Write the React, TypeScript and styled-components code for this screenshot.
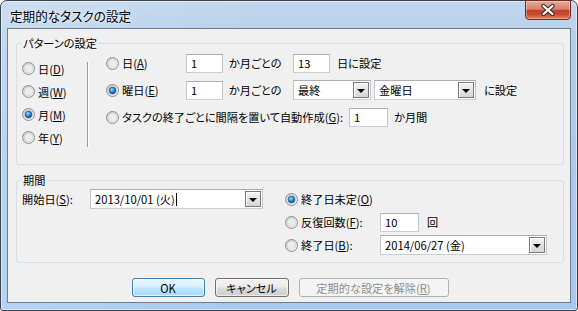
import React from 'react';
import styled, { createGlobalStyle } from 'styled-components';

const GlobalStyle = createGlobalStyle`
  html, body {
    margin: 0;
    padding: 0;
    background: #ffffff;
  }
  body {
    font-family: 'Noto Sans CJK JP', 'Noto Sans', sans-serif;
    font-size: 11.2px;
    line-height: 14px;
    color: #000;
    font-feature-settings: 'palt';
  }
`;

const Window = styled.div`
  box-sizing: border-box;
  width: 578px;
  height: 311px;
  display: flex;
  flex-direction: column;
  padding: 0 6px 7px 6px;
  border: 1px solid #39434e;
  border-radius: 7px 7px 3px 3px;
  background:
    linear-gradient(90deg, rgba(255, 255, 255, 0.18), rgba(255, 255, 255, 0) 45%),
    linear-gradient(180deg, #c2d7ee 0%, #b6cfea 12%, #a9c9ec 55%, #a6c9ef 100%);
  box-shadow: inset 0 0 0 1px rgba(255, 255, 255, 0.5);
`;

const TitleBar = styled.div`
  height: 27px;
  display: flex;
  justify-content: space-between;
  align-items: flex-start;
`;

const Title = styled.div`
  padding: 7px 0 0 3px;
  font-size: 12.6px;
  line-height: 16px;
  text-shadow: 0 0 6px rgba(255, 255, 255, 0.9), 0 0 2px rgba(255, 255, 255, 0.8);
`;

const CloseButton = styled.div`
  box-sizing: border-box;
  width: 46px;
  height: 20px;
  margin-top: -1px;
  display: flex;
  align-items: center;
  justify-content: center;
  border: 1px solid #6b2a22;
  border-radius: 0 0 4px 4px;
  background: linear-gradient(180deg, #e8a898 0%, #d9826d 45%, #c4412a 52%, #cc4a2f 75%, #e4805e 100%);
  box-shadow: inset 0 0 0 1px rgba(255, 255, 255, 0.35);
`;

const Client = styled.div`
  flex: 1;
  display: flex;
  flex-direction: column;
  padding: 7px 6px 0 8px;
  background: #f0f0f0;
  border: 1px solid #6f7d8e;
`;

const Group = styled.fieldset<{ $h: number; $top?: number }>`
  box-sizing: border-box;
  height: ${p => p.$h}px;
  margin: ${p => p.$top ?? 0}px 0 0 0;
  padding: 0 6px 0 5px;
  min-width: 0;
  border: 1px solid #d5dfe5;
  border-radius: 3px;
`;

const Legend = styled.legend`
  padding: 0 1px;
  line-height: 14px;
`;

const PatternBody = styled.div`
  display: flex;
  align-items: flex-start;
  padding-top: 7px;
`;

const ModeCol = styled.div`
  width: 65px;
  display: flex;
  flex-direction: column;
`;

const ModeRow = styled.div`
  height: 23px;
  display: flex;
  align-items: center;
`;

const Separator = styled.div`
  width: 1px;
  height: 85px;
  margin: 5px 18px 0 0;
  background: #a0a0a0;
  box-shadow: 1px 0 0 #ffffff;
`;

const RuleGrid = styled.div`
  margin-top: -4px;
  display: grid;
  grid-template-columns: 80px 37px 70px max-content;
  grid-auto-rows: 20px;
  row-gap: 7px;
  align-items: center;
`;

const RadioLabel = styled.label`
  display: flex;
  align-items: center;
  gap: 3px;
  white-space: nowrap;
`;

const Text = styled.span<{ $pad?: number }>`
  padding-left: ${p => p.$pad ?? 0}px;
  white-space: nowrap;
`;

const Key = styled.span`
  text-decoration: underline;
  text-underline-offset: 1px;
`;

const TextBox = styled.div<{ $w: number }>`
  box-sizing: border-box;
  width: ${p => p.$w}px;
  height: 19px;
  padding-left: 4px;
  line-height: 17px;
  background: #ffffff;
  border: 1px solid #abadb3;
  border-color: #abadb3 #c2c5cc #c9ced6 #c2c5cc;
  white-space: nowrap;
`;

const Combo = styled.div<{ $w: number }>`
  box-sizing: border-box;
  width: ${p => p.$w}px;
  height: 20px;
  display: flex;
  align-items: center;
  justify-content: space-between;
  padding: 0 1px 0 4px;
  background: #ffffff;
  border: 1px solid #abadb3;
  border-color: #abadb3 #c2c5cc #c9ced6 #c2c5cc;
  white-space: nowrap;
`;

const DropButton = styled.div`
  box-sizing: border-box;
  width: 16px;
  height: 16px;
  display: flex;
  align-items: center;
  justify-content: center;
  border: 1px solid #7a7a7a;
  background: linear-gradient(180deg, #f4f4f4 0%, #e4e4e4 50%, #d6d6d6 100%);
  box-shadow: inset 1px 1px 0 #ffffff;
`;

const Arrow = styled.span`
  width: 0;
  height: 0;
  margin-top: 2px;
  border-left: 4px solid transparent;
  border-right: 4px solid transparent;
  border-top: 4px solid #000;
`;

const Caret = styled.span`
  display: inline-block;
  width: 1px;
  height: 13px;
  margin-left: 1px;
  vertical-align: -2px;
  background: #000;
`;

const Inline = styled.div<{ $gap: number }>`
  display: flex;
  align-items: center;
  gap: ${p => p.$gap}px;
`;

const WideRow = styled.div`
  grid-column: 1 / -1;
  display: flex;
  align-items: center;
  gap: 6px;
`;

const PeriodBody = styled.div`
  display: flex;
  align-items: flex-start;
  padding-top: 2px;
`;

const StartRow = styled.div`
  height: 20px;
  display: flex;
  align-items: center;
`;

const StartLabel = styled.span`
  width: 68px;
  white-space: nowrap;
`;

const EndGrid = styled.div`
  margin-left: 22px;
  display: grid;
  grid-template-columns: 95px max-content;
  grid-auto-rows: 20px;
  row-gap: 3px;
  align-items: center;
`;

const Buttons = styled.div`
  margin-top: 15px;
  display: flex;
  justify-content: center;
  gap: 10px;
`;

const Button = styled.div<{ $w: number; $kind?: 'default' | 'normal' | 'disabled' }>`
  box-sizing: border-box;
  width: ${p => p.$w}px;
  height: 19px;
  display: flex;
  align-items: center;
  justify-content: center;
  border-radius: 3px;
  border: 1px solid
    ${p => (p.$kind === 'default' ? '#3c7fb1' : p.$kind === 'disabled' ? '#adb2b5' : '#707070')};
  color: ${p => (p.$kind === 'disabled' ? '#8d8d8d' : '#000')};
  background: ${p =>
    p.$kind === 'default'
      ? 'linear-gradient(180deg, #eaf6fd 0%, #d9f0fc 48%, #bee6fd 52%, #a9daf6 100%)'
      : p.$kind === 'disabled'
      ? '#f4f4f4'
      : 'linear-gradient(180deg, #f2f2f2 0%, #ebebeb 48%, #dddddd 52%, #cfcfcf 100%)'};
  box-shadow: inset 0 0 0 1px rgba(255, 255, 255, ${p => (p.$kind === 'disabled' ? 0 : 0.6)});
  white-space: nowrap;
`;

const RadioMark = styled.svg`
  flex-shrink: 0;
  display: block;
`;

function Radio({ checked }: { checked?: boolean }) {
  const id = checked ? 'rdOn' : 'rdOff';
  return (
    <RadioMark width="13" height="13" viewBox="0 0 13 13">
      <defs>
        <linearGradient id={`${id}Ring`} x1="0" y1="0" x2="1" y2="1">
          <stop offset="0" stopColor="#c9c9c9" />
          <stop offset="1" stopColor="#f7f7f7" />
        </linearGradient>
        <radialGradient id={`${id}Dot`} cx="0.4" cy="0.35" r="0.75">
          <stop offset="0" stopColor="#a6dcfb" />
          <stop offset="0.45" stopColor="#2f8ad0" />
          <stop offset="1" stopColor="#0b467c" />
        </radialGradient>
      </defs>
      <circle cx="6.5" cy="6.5" r="6" fill={`url(#${id}Ring)`} stroke="#8f8f8f" strokeWidth="1" />
      <circle cx="6.5" cy="6.5" r="4.2" fill="#ececec" stroke="#d0d0d0" strokeWidth="0.6" />
      {checked && <circle cx="6.5" cy="6.5" r="3.4" fill={`url(#${id}Dot)`} stroke="#17548a" strokeWidth="0.6" />}
    </RadioMark>
  );
}

function Choice({ checked, children }: { checked?: boolean; children: React.ReactNode }) {
  return (
    <RadioLabel>
      <Radio checked={checked} />
      <span>{children}</span>
    </RadioLabel>
  );
}

function Dropdown({ w, children }: { w: number; children: React.ReactNode }) {
  return (
    <Combo $w={w}>
      <span>{children}</span>
      <DropButton>
        <Arrow />
      </DropButton>
    </Combo>
  );
}

export default function App() {
  return (
    <>
      <GlobalStyle />
      <Window>
        <TitleBar>
          <Title>定期的なタスクの設定</Title>
          <CloseButton>
            <svg width="14" height="12" viewBox="0 0 14 12">
              <path d="M2.5 2 L11.5 10 M11.5 2 L2.5 10" stroke="#2f2f2f" strokeWidth="4.2" strokeLinecap="round" />
              <path d="M2.5 2 L11.5 10 M11.5 2 L2.5 10" stroke="#ffffff" strokeWidth="2.2" strokeLinecap="round" />
            </svg>
          </CloseButton>
        </TitleBar>
        <Client>
          <Group $h={129}>
            <Legend>パターンの設定</Legend>
            <PatternBody>
              <ModeCol>
                <ModeRow>
                  <Choice>日(<Key>D</Key>)</Choice>
                </ModeRow>
                <ModeRow>
                  <Choice>週(<Key>W</Key>)</Choice>
                </ModeRow>
                <ModeRow>
                  <Choice checked>月(<Key>M</Key>)</Choice>
                </ModeRow>
                <ModeRow>
                  <Choice>年(<Key>Y</Key>)</Choice>
                </ModeRow>
              </ModeCol>
              <Separator />
              <RuleGrid>
                <Choice>日(<Key>A</Key>)</Choice>
                <TextBox $w={37}>1</TextBox>
                <Text $pad={6}>か月ごとの</Text>
                <Inline $gap={7}>
                  <TextBox $w={37}>13</TextBox>
                  <Text>日に設定</Text>
                </Inline>

                <Choice checked>曜日(<Key>E</Key>)</Choice>
                <TextBox $w={37}>1</TextBox>
                <Text $pad={6}>か月ごとの</Text>
                <Inline $gap={3}>
                  <Dropdown w={78}>最終</Dropdown>
                  <Dropdown w={102}>金曜日</Dropdown>
                  <Text $pad={5}>に設定</Text>
                </Inline>

                <WideRow>
                  <Choice>タスクの終了ごとに間隔を置いて自動作成(<Key>G</Key>):</Choice>
                  <TextBox $w={39}>1</TextBox>
                  <Text>か月間</Text>
                </WideRow>
              </RuleGrid>
            </PatternBody>
          </Group>

          <Group $h={90} $top={8}>
            <Legend>期間</Legend>
            <PeriodBody>
              <StartRow>
                <StartLabel>開始日(<Key>S</Key>):</StartLabel>
                <Dropdown w={173}>
                  2013/10/01 (火)<Caret />
                </Dropdown>
              </StartRow>
              <EndGrid>
                <WideRow>
                  <Choice checked>終了日未定(<Key>O</Key>)</Choice>
                </WideRow>
                <Choice>反復回数(<Key>F</Key>):</Choice>
                <Inline $gap={8}>
                  <TextBox $w={39}>10</TextBox>
                  <Text>回</Text>
                </Inline>
                <Choice>終了日(<Key>B</Key>):</Choice>
                <Dropdown w={167}>2014/06/27 (金)</Dropdown>
              </EndGrid>
            </PeriodBody>
          </Group>

          <Buttons>
            <Button $w={73} $kind="default">OK</Button>
            <Button $w={74}>キャンセル</Button>
            <Button $w={150} $kind="disabled">
              定期的な設定を解除(<Key>R</Key>)
            </Button>
          </Buttons>
        </Client>
      </Window>
    </>
  );
}
